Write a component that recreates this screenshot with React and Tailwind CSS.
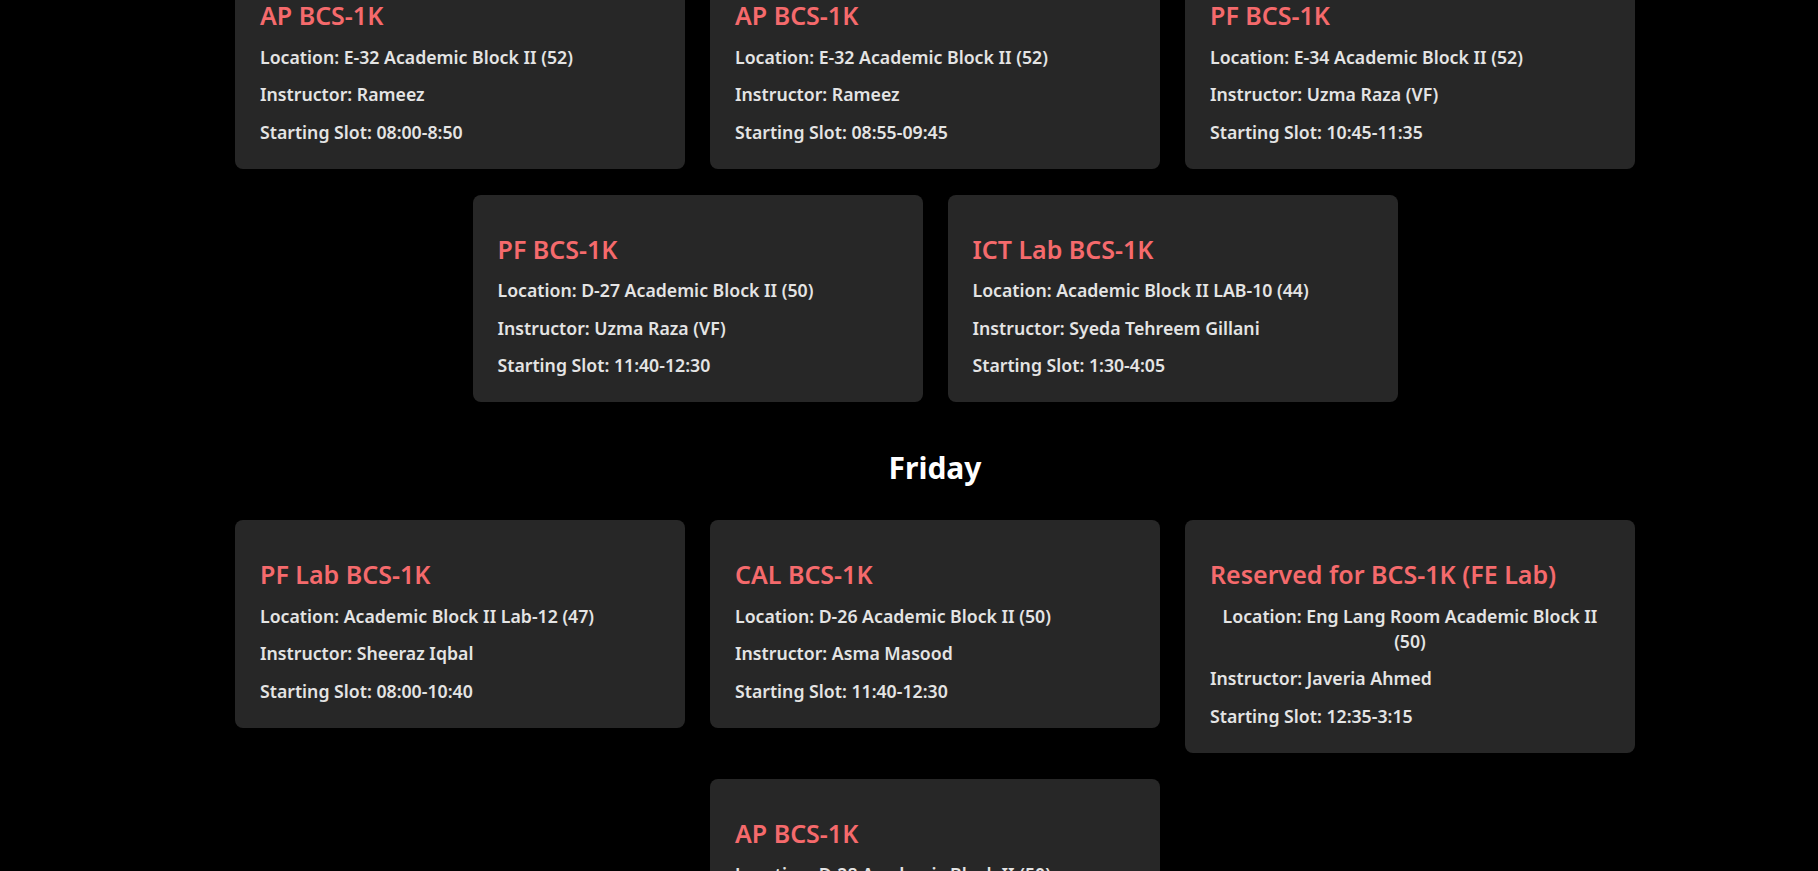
import React from 'react'

const schedule = [
  {
    day: null,
    classes: [
      { title: 'AP BCS-1K', location: 'E-32 Academic Block II (52)', instructor: 'Rameez', slot: '08:00-8:50' },
      { title: 'AP BCS-1K', location: 'E-32 Academic Block II (52)', instructor: 'Rameez', slot: '08:55-09:45' },
      { title: 'PF BCS-1K', location: 'E-34 Academic Block II (52)', instructor: 'Uzma Raza (VF)', slot: '10:45-11:35' },
      { title: 'PF BCS-1K', location: 'D-27 Academic Block II (50)', instructor: 'Uzma Raza (VF)', slot: '11:40-12:30' },
      { title: 'ICT Lab BCS-1K', location: 'Academic Block II LAB-10 (44)', instructor: 'Syeda Tehreem Gillani', slot: '1:30-4:05' },
    ],
  },
  {
    day: 'Friday',
    classes: [
      { title: 'PF Lab BCS-1K', location: 'Academic Block II Lab-12 (47)', instructor: 'Sheeraz Iqbal', slot: '08:00-10:40' },
      { title: 'CAL BCS-1K', location: 'D-26 Academic Block II (50)', instructor: 'Asma Masood', slot: '11:40-12:30' },
      { title: 'Reserved for BCS-1K (FE Lab)', location: 'Eng Lang Room Academic Block II (50)', instructor: 'Javeria Ahmed', slot: '12:35-3:15' },
      { title: 'AP BCS-1K', location: 'D-28 Academic Block II (50)', instructor: 'Rameez', slot: '08:00-8:50' },
    ],
  },
]

const ClassCard = ({ item }) => (
  <div className="w-[450px] rounded-lg bg-[#272727] px-[25px] pt-[37px] pb-[24px] flex flex-col items-start text-center gap-[12.5px]">
    <h2 className="text-[25px] leading-[34px] font-semibold text-[#f56a6c]">{item.title}</h2>
    <p className="text-[17.7px] leading-[25px] font-semibold text-[#e4e4e4]">Location: {item.location}</p>
    <p className="text-[17.7px] leading-[25px] font-semibold text-[#e4e4e4]">Instructor: {item.instructor}</p>
    <p className="text-[17.7px] leading-[25px] font-semibold text-[#e4e4e4]">Starting Slot: {item.slot}</p>
  </div>
)

export default function App() {
  return (
    <div className="min-h-screen bg-black pl-[52px] overflow-hidden" style={{ fontFamily: '"Noto Sans", "Open Sans", sans-serif' }}>
      <div className="-mt-[39px] flex flex-col items-center">
        {schedule.map((section, i) => (
          <section key={i} className="flex flex-col items-center">
            {section.day && (
              <h1 className="mt-[46px] mb-[32px] text-[30px] leading-[40px] font-bold text-white">{section.day}</h1>
            )}
            <div className="w-[1400px] flex flex-wrap justify-center items-start gap-x-[25px] gap-y-[26px]">
              {section.classes.map((c, j) => (
                <ClassCard key={j} item={c} />
              ))}
            </div>
          </section>
        ))}
      </div>
    </div>
  )
}
